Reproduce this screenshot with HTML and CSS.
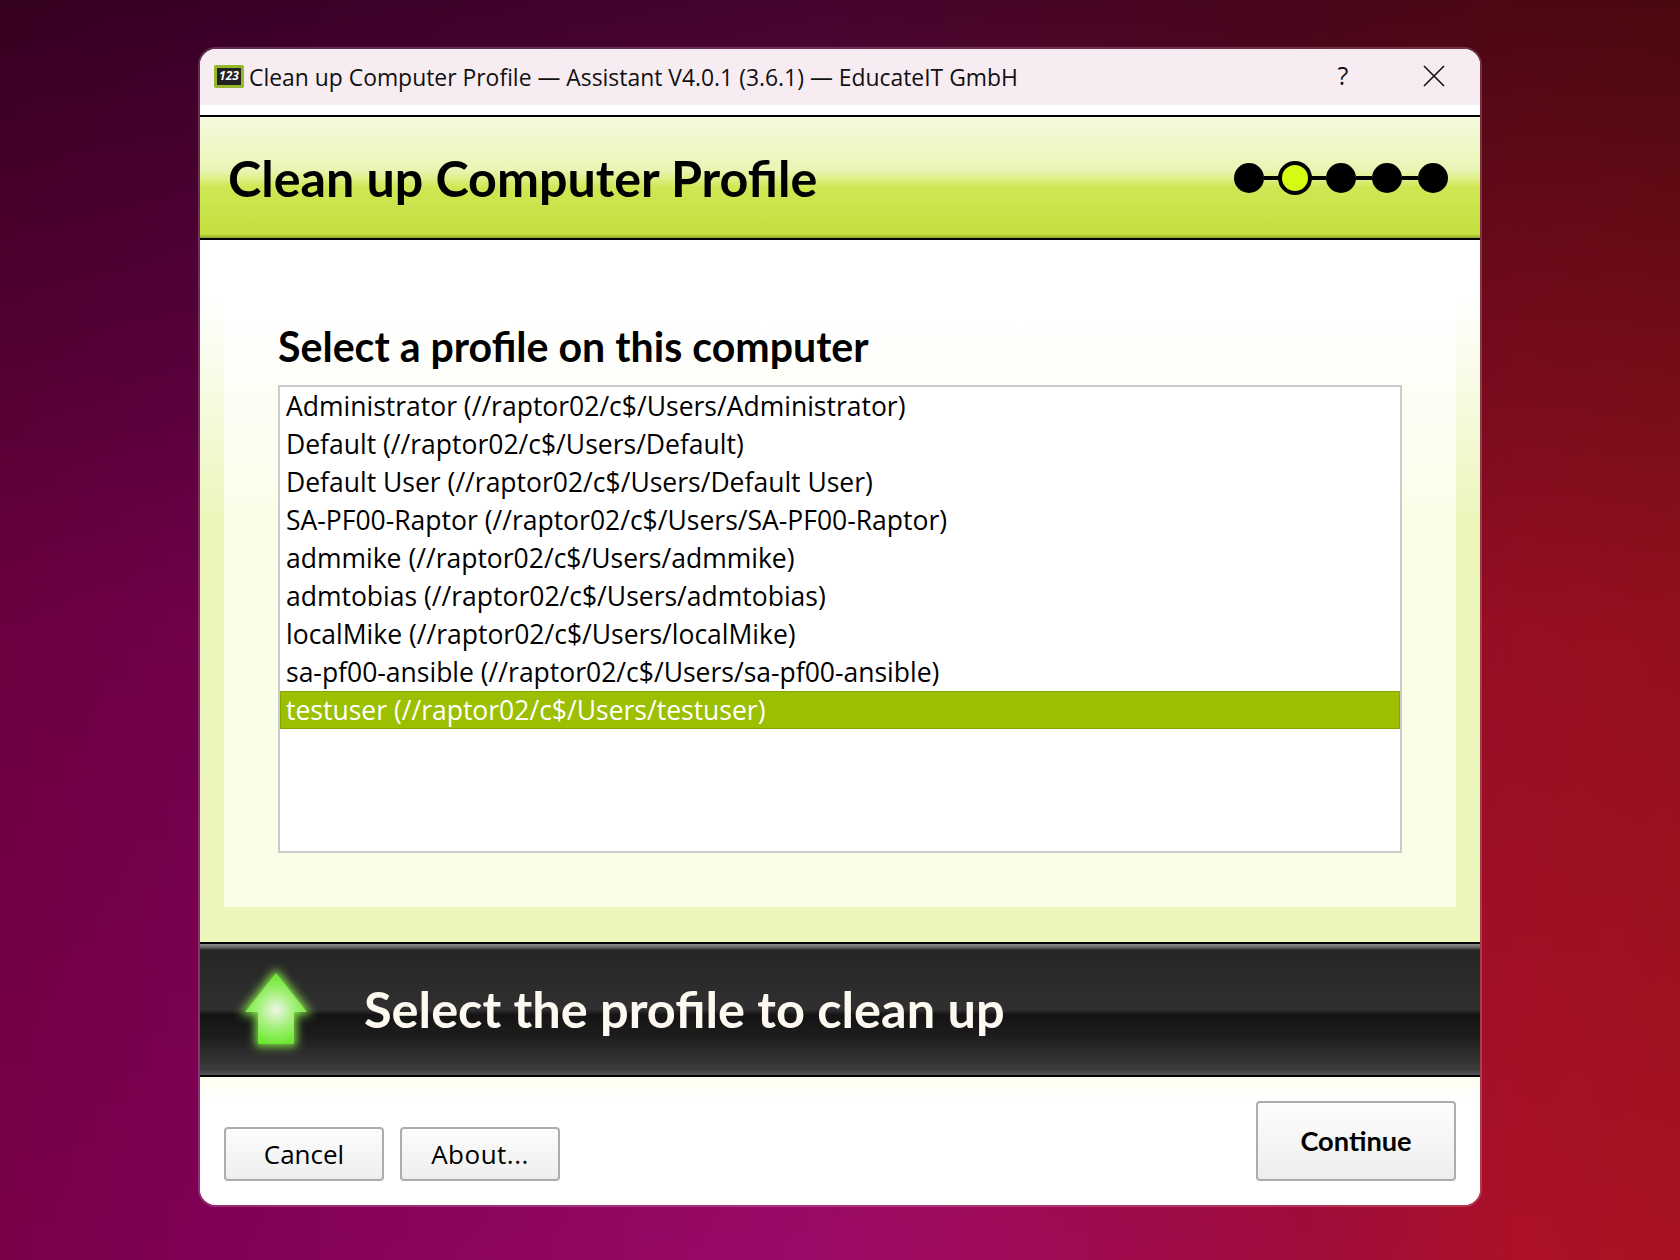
FILE: index.html
```html
<!DOCTYPE html>
<html lang="en">
<head>
    <meta charset="UTF-8">
    <meta name="viewport" content="width=device-width, initial-scale=1.0">
    <title>Clean up Computer Profile</title>
    <link rel="stylesheet" href="styles.css">
</head>
<body>
    <div class="window">
        <div class="titlebar">
            <div class="app-icon"><span>123</span></div>
            <div class="title-text">Clean up Computer Profile — Assistant V4.0.1 (3.6.1) — EducateIT GmbH</div>
            <div class="help-btn">?</div>
            <div class="close-btn">
                <svg width="22" height="22" viewBox="0 0 22 22">
                    <path d="M1 1 L21 21 M21 1 L1 21" stroke="#111" stroke-width="1.6" fill="none"/>
                </svg>
            </div>
        </div>

        <div class="header">
            <h1>Clean up Computer Profile</h1>
            <div class="steps">
                <span class="dot"></span><span class="link"></span>
                <span class="dot active"></span><span class="link"></span>
                <span class="dot"></span><span class="link"></span>
                <span class="dot"></span><span class="link"></span>
                <span class="dot"></span>
            </div>
        </div>

        <div class="content">
            <div class="panel">
                <h2>Select a profile on this computer</h2>
                <div class="profile-list">
                    <div class="row">Administrator (//raptor02/c$/Users/Administrator)</div>
                    <div class="row">Default (//raptor02/c$/Users/Default)</div>
                    <div class="row">Default User (//raptor02/c$/Users/Default User)</div>
                    <div class="row">SA-PF00-Raptor (//raptor02/c$/Users/SA-PF00-Raptor)</div>
                    <div class="row">admmike (//raptor02/c$/Users/admmike)</div>
                    <div class="row">admtobias (//raptor02/c$/Users/admtobias)</div>
                    <div class="row">localMike (//raptor02/c$/Users/localMike)</div>
                    <div class="row">sa-pf00-ansible (//raptor02/c$/Users/sa-pf00-ansible)</div>
                    <div class="row selected">testuser (//raptor02/c$/Users/testuser)</div>
                </div>
            </div>
        </div>

        <div class="hint">
            <svg class="arrow" width="92" height="100" viewBox="0 0 92 100">
                <defs>
                    <radialGradient id="arrowFill" gradientUnits="userSpaceOnUse" cx="46" cy="47" r="36">
                        <stop offset="0" stop-color="#eef5e6"/>
                        <stop offset="0.5" stop-color="#a4f07a"/>
                        <stop offset="1" stop-color="#68e82c"/>
                    </radialGradient>
                    <filter id="arrowGlow" x="-40%" y="-40%" width="180%" height="180%">
                        <feGaussianBlur stdDeviation="5"/>
                    </filter>
                </defs>
                <path d="M46 10 L77 49 L64 49 L64 81 L28 81 L28 49 L15 49 Z" fill="#8cf04c" opacity="0.95" stroke="#8cf04c" stroke-width="5" filter="url(#arrowGlow)"/>
                <path d="M46 10 L77 49 L64 49 L64 81 L28 81 L28 49 L15 49 Z" fill="url(#arrowFill)"/>
            </svg>
            <div class="hint-text">Select the profile to clean up</div>
        </div>

        <div class="footer">
            <button class="btn">Cancel</button>
            <button class="btn about">About...</button>
            <button class="btn primary">Continue</button>
        </div>
    </div>
</body>
</html>
```

FILE: styles.css
```css
html, body {
    height: 100%;
}
body {
    margin: 0;
    padding-top: 49px;
    box-sizing: border-box;
    font-family: 'Open Sans', 'Noto Sans', sans-serif;
    color: #000;
    background:
        linear-gradient(rgba(0, 0, 0, 0.56) 0%, rgba(0, 0, 0, 0.13) 50%, rgba(0, 0, 0, 0) 100%),
        linear-gradient(90deg, #7a0048 0%, #800055 12%, #9a0a68 48%, #a00a58 60%, #a00c3a 78%, #ac1028 90%, #a81222 100%);
    overflow: hidden;
}
.window {
    width: 1280px;
    height: 1156px;
    margin: 0 auto;
    background: #fff;
    border-radius: 16px;
    overflow: hidden;
    box-shadow: 0 0 0 2px rgba(255, 255, 255, 0.18);
    display: flex;
    flex-direction: column;
}
.titlebar {
    height: 56px;
    margin-bottom: 10px;
    background: #f8ecf3;
    display: flex;
    align-items: center;
    padding-left: 14px;
    flex: none;
}
.app-icon {
    width: 30px;
    height: 23px;
    box-sizing: border-box;
    background: #222;
    border: 3px solid #95b82d;
    border-radius: 2px;
    color: #fff;
    font-size: 12px;
    font-weight: 700;
    font-style: italic;
    display: flex;
    align-items: center;
    justify-content: center;
    margin-right: 5px;
    margin-top: -2px;
    line-height: 1;
}
.title-text {
    font-size: 22.9px;
    flex: 1;
    color: #111;
}
.help-btn {
    width: 90px;
    margin-left: -2px;
    margin-right: 1px;
    margin-top: -4px;
    text-align: center;
    font-size: 25px;
    color: #111;
}
.close-btn {
    width: 92px;
    display: flex;
    justify-content: center;
    margin-left: -1px;
    margin-top: -3px;
}
.header {
    height: 121px;
    box-sizing: content-box;
    border-top: 2px solid #000;
    border-bottom: 2px solid #000;
    background: linear-gradient(#f7fbdf 0%, #e8f5b4 44%, #e0f08e 50%, #d0e754 58%, #c3de3e 97%, #8da524 100%);
    display: flex;
    align-items: center;
    justify-content: space-between;
    padding: 0 32px 0 28px;
    flex: none;
}
.header h1 {
    margin: 0;
    font-family: Lato, 'Open Sans', sans-serif;
    font-size: 50.2px;
    font-weight: 700;
}
.steps {
    display: flex;
    align-items: center;
}
.dot {
    width: 30px;
    height: 30px;
    border-radius: 50%;
    background: #000;
}
.dot.active {
    width: 26px;
    height: 26px;
    margin: 0 -2px;
    border: 4px solid #000;
    background: #d6fb12;
}
.link {
    width: 16px;
    height: 4px;
    background: #000;
}
.content {
    height: 702px;
    padding: 0 24px 35px;
    box-sizing: border-box;
    background: linear-gradient(#fff 0%, #fff 8%, #ecf6bb 40%, #ecf6bb 100%);
    flex: none;
}
.panel {
    height: 100%;
    box-sizing: border-box;
    padding: 80px 54px 0;
    background: linear-gradient(#fff 0%, #fff 12%, #fafee9 40%, #fafee9 100%);
}
.panel h2 {
    margin: 0 0 13px;
    font-family: Lato, 'Open Sans', sans-serif;
    font-size: 41.1px;
    font-weight: 700;
    line-height: 52px;
}
.profile-list {
    height: 468px;
    box-sizing: border-box;
    border: 2px solid #ccc;
    background: #fff;
}
.row {
    height: 38px;
    line-height: 38px;
    font-size: 26.5px;
    padding-left: 6px;
    white-space: nowrap;
}
.row.selected {
    background: #9cc000;
    color: #fff;
    box-shadow: inset 0 0 0 1px #86a600;
}
.hint {
    height: 135px;
    box-sizing: border-box;
    border-top: 2px solid #000;
    border-bottom: 2px solid #000;
    background: linear-gradient(#8a8a8a 0, #6e6e6e 3px, #252525 6px, #303030 50%, #141414 54%, #1c1c1c 70%, #3c3c3c 96%, #555 100%);
    display: flex;
    align-items: center;
    flex: none;
}
.arrow {
    margin: 6px 0 0 30px;
    flex: none;
}
.hint-text {
    margin-left: 42px;
    padding-bottom: 2px;
    font-family: Lato, 'Open Sans', sans-serif;
    font-size: 50.5px;
    font-weight: 700;
    color: #fdf8f0;
}
.footer {
    flex: 1;
    display: flex;
    align-items: flex-end;
    gap: 16px;
    padding: 0 24px 24px;
    background: linear-gradient(#fefeef 0, #fff 24px);
}
.btn {
    width: 160px;
    height: 54px;
    box-sizing: border-box;
    border: 2px solid #adadad;
    border-radius: 4px;
    background: linear-gradient(#fdfdfd, #eeeeee);
    font-family: inherit;
    font-size: 26px;
    color: #000;
    padding: 0;
}
.btn.about {
    letter-spacing: 0.5px;
}
.btn.primary {
    width: 200px;
    height: 80px;
    margin-left: auto;
    padding-bottom: 2px;
    font-family: Lato, 'Open Sans', sans-serif;
    font-size: 27.2px;
    font-weight: 700;
}
```
